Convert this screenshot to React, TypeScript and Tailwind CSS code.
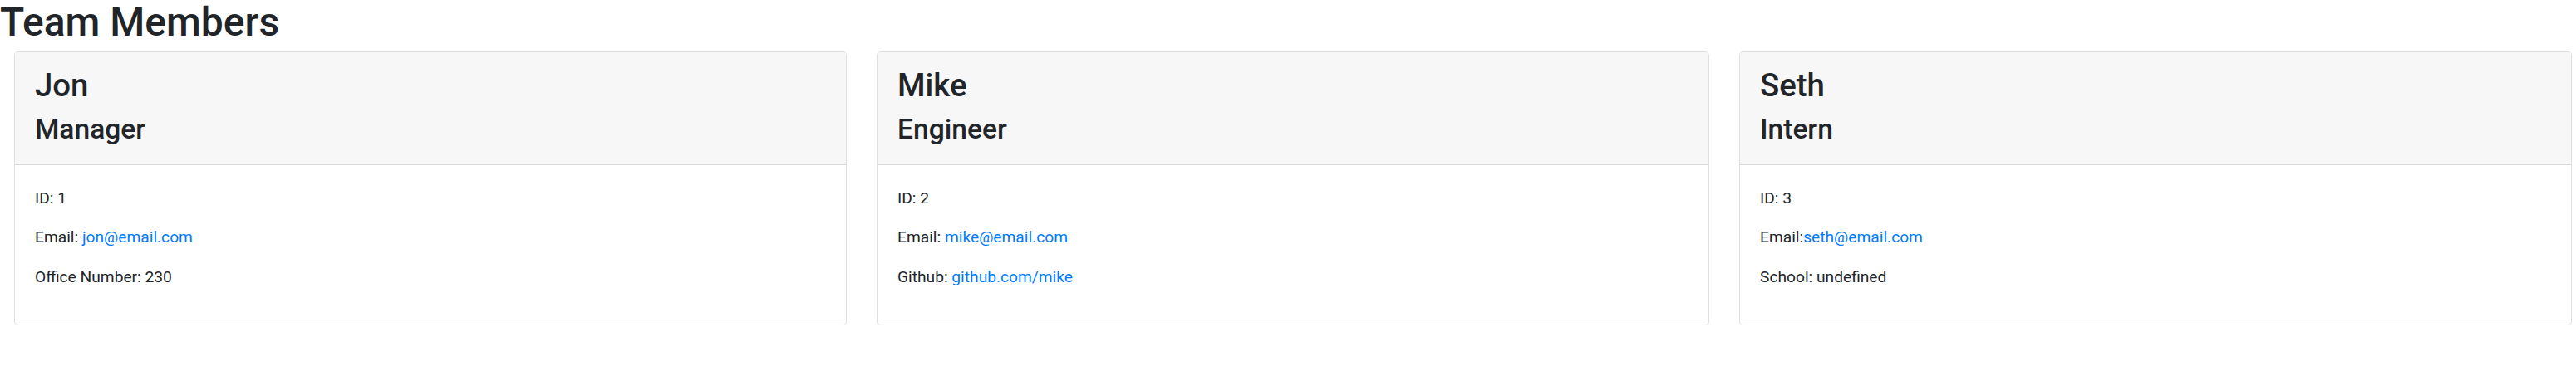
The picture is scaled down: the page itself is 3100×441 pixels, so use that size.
import React from "react";

type Member = {
  name: string;
  role: string;
  id: number;
  email: string;
  emailSep: string;
  extraLabel: string;
  extraValue: string;
  extraLink?: boolean;
};

const members: Member[] = [
  { name: "Jon", role: "Manager", id: 1, email: "jon@email.com", emailSep: "Email: ", extraLabel: "Office Number: ", extraValue: "230" },
  { name: "Mike", role: "Engineer", id: 2, email: "mike@email.com", emailSep: "Email: ", extraLabel: "Github: ", extraValue: "github.com/mike", extraLink: true },
  { name: "Seth", role: "Intern", id: 3, email: "seth@email.com", emailSep: "Email:", extraLabel: "School: ", extraValue: "undefined" },
];

function Card({ m }: { m: Member }) {
  return (
    <div className="w-[1002px] h-[330px] shrink-0 border border-[rgba(0,0,0,0.125)] rounded-[4.8px] overflow-hidden bg-white flex flex-col">
      <div className="h-[136px] bg-[#f7f7f7] border-b border-[rgba(0,0,0,0.125)] px-[24px] pt-[17px]">
        <h2 className="text-[38.4px] leading-[46.08px] font-medium mb-[9.6px]">{m.name}</h2>
        <h3 className="text-[33.6px] leading-[40.32px] font-medium">{m.role}</h3>
      </div>
      <div className="px-[24px] pt-[25.5px] text-[19.2px] leading-[28.8px]">
        <p className="mb-[19.2px]">ID: {m.id}</p>
        <p className="mb-[19.2px]">
          {m.emailSep}
          <a className="text-[#007bff]" href="#">{m.email}</a>
        </p>
        <p>
          {m.extraLabel}
          {m.extraLink ? <a className="text-[#007bff]" href="#">{m.extraValue}</a> : m.extraValue}
        </p>
      </div>
    </div>
  );
}

export default function App() {
  return (
    <div className="w-[3100px] h-[441px] bg-white text-[#212529] font-['Roboto',sans-serif]">
      <h1 className="text-[48px] leading-[54px] font-medium">Team Members</h1>
      <div className="flex gap-[36px] pl-[17px] mt-[8px]">
        {members.map((m) => (
          <Card key={m.name} m={m} />
        ))}
      </div>
    </div>
  );
}
